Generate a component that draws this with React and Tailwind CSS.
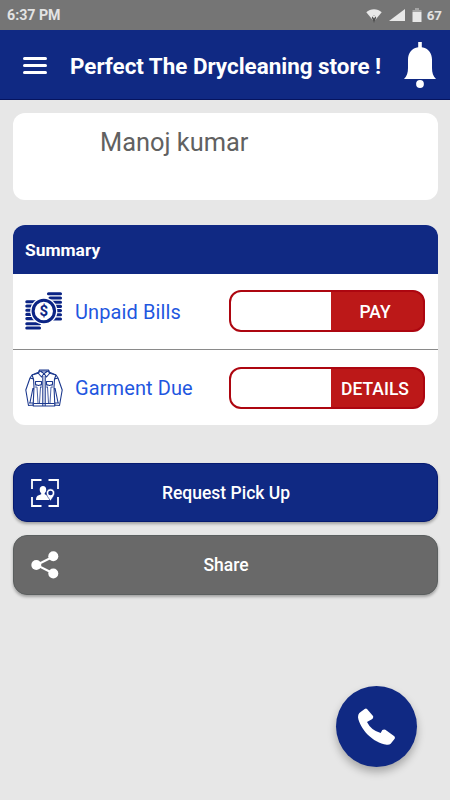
function WifiIcon() {
  return (
    <svg className="relative top-px" width="16" height="16" viewBox="0 0 16 16">
      <path d="M0.3 4.2C4.4 0.2 11.6 0.2 15.7 4.2L8 13.500Z" fill="#e8e8e8" />
      <path d="M5.800 9.500 8 7l2.200 2.500L8 15Z" fill="#4d4d4d" />
      <path d="M6.600 8.500 8 6.900l1.400 1.600L8 10.400Z" fill="#e8e8e8" />
    </svg>
  );
}

function BellIcon() {
  return (
    <svg width="32" height="46" viewBox="0 0 32 46" fill="white">
      <path d="M14.2 0h3.600v5.200c6.200.9 10.200 5.700 10.200 12.300v8.500c0 4.800 1.100 8.200 4 11H0c2.900-2.800 4-6.200 4-11v-8.500C4 10.900 8 6.100 14.200 5.200Z" />
      <circle cx="16" cy="42" r="3.900" />
    </svg>
  );
}

function BillsIcon() {
  return (
    <svg width="38" height="38" viewBox="0 0 38 38">
      <g stroke="#0b2485" strokeWidth="3.100" strokeLinecap="round">
        <path d="M23.500 1.800H35.500M25 6H35.500M1.800 9.800H10M1.800 14H10M1.800 18.200H10M1.800 22.400H10M1.800 26.600H12M1.800 31.800H14.500M1.800 36H14.500" />
        <path d="M26 10.200H35.500M28 14.400H35.500M28 18.600H35.500M28 22.800H35.500M28 27H35.500" />
      </g>
      <circle cx="18.800" cy="19" r="13.600" fill="white" />
      <circle cx="18.800" cy="19" r="10.700" fill="white" stroke="#0b2485" strokeWidth="3.100" />
      <text x="18.800" y="24.300" textAnchor="middle" fontSize="15" fontWeight="700" fill="#0b2485" fontFamily="Roboto, sans-serif">$</text>
    </svg>
  );
}

function JacketIcon() {
  return (
    <svg width="38" height="38" viewBox="0 0 38 38" fill="none" stroke="#1c398e" strokeWidth="1.100" strokeLinejoin="round">
      <path d="M14.500 1H23.500L24 3 31 6 33 9 37.200 21 34.500 36.500 30 36 29.700 33V37H8.300V33L8 36 3.500 36.500.800 21 5 9 7 6 14 3Z" />
      <path d="M14.500 1 13.500 4.500 16.500 8 19 4.500 21.500 8 24.500 4.500 23.500 1M15 2H23L19 4.500Z" />
      <path d="M7 6 8.500 10M31 6 29.500 10M7 6 14 4M31 6 24 4M5 9 8.500 10M33 9 29.500 10" />
      <path d="M8.500 10 9 18 8.300 33M29.500 10 29 18 29.700 33M8 19 5 33.500M30 19 33 33.500M4 34H8M30 34H34" />
      <path d="M17.800 7V37M20.200 7V37M8.500 34.500H29.500" />
      <path d="M10.500 12.500H16.500V15.500L13.500 16.500 10.500 15.500ZM21.500 12.500H27.500V15.500L24.500 16.500 21.500 15.500Z" />
      <path d="M11 16V19M16 16V19M22 16V19M27 16V19M12 18 13 34M15.500 18 14.500 34M22.500 18 23.500 34M26 18 25 34" strokeWidth="0.800" />
    </svg>
  );
}

function PickUpIcon() {
  return (
    <svg width="28" height="28" viewBox="0 0 28 28">
      <path d="M1 10V1H10.500M17.500 1H27V10M27 18V27H17.500M10.500 27H1V18" fill="none" stroke="white" strokeWidth="1.800" />
      <path d="M12 7c2 0 3.200 1.300 3.200 3.500 0 1.700-.600 3-1.500 3.700v1l2.500 1.200c1.500.700 2.500 1.500 2.800 4.600H5c0-3.300 1-4 2.700-4.700l2.500-1.100v-1c-.900-.700-1.500-2-1.500-3.700C8.700 8.300 10 7 12 7Z" fill="white" />
      <path d="M19.500 9.800c2.500 0 4.200 1.800 4.200 4.200 0 2.500-2.200 4.700-4.200 8-2-3.300-4.200-5.500-4.200-8 0-2.400 1.700-4.200 4.200-4.200Z" fill="white" stroke="#102983" strokeWidth=".600" />
      <circle cx="19.500" cy="14" r="2.300" fill="#102983" />
    </svg>
  );
}

function ShareIcon() {
  return (
    <svg width="28" height="28" viewBox="0 0 28 28" fill="white">
      <path d="M22.500 5.500 5.500 14 22.500 22.500" fill="none" stroke="white" strokeWidth="2" />
      <circle cx="22.300" cy="5.300" r="5" />
      <circle cx="5.300" cy="14" r="5" />
      <circle cx="22.300" cy="22.500" r="5" />
    </svg>
  );
}

function PhoneIcon() {
  return (
    <svg width="37" height="37" viewBox="0 0 111 111" fill="white">
      <path d="M20 3Q24 0 27 3L45 24Q47 28 43 33L27 42Q39 67 68 75L73 66Q77 63 82 65L109 85Q112 88 110 92L98 107Q94 111 86 110C45 106 5 62 0 28Q0 19 4 15Z" />
    </svg>
  );
}

function SummaryRow({ icon, label, action, className }) {
  return (
    <div className={`flex items-center pl-3 pr-[12.5px] ${className}`}>
      {icon}
      <span className="ml-[12.5px] flex-1 pt-px text-[20px] leading-6 tracking-[0.1px] text-[#1f57e0]">{label}</span>
      <div className="flex h-[42px] w-[196px] overflow-hidden rounded-[12px] border-2 border-[#ad0610] bg-[#bc1818]">
        <div className="flex-1 bg-white" />
        <button className="w-[92px] pr-1 pt-[2px] text-[17.500px] font-medium text-white">{action}</button>
      </div>
    </div>
  );
}

export default function App() {
  return (
    <div className="relative h-[800px] w-[450px] overflow-hidden bg-[#e7e7e7] font-[Roboto,sans-serif]">
      <div className="flex h-[30px] items-center bg-[#757575] pl-[7px] pr-2 text-[14.2px] font-bold text-[#e3e3e3]">
        <span className="pt-px">6:37 PM</span>
        <div className="ml-auto flex items-center">
          <WifiIcon />
          <svg className="ml-[7px]" width="16" height="12" viewBox="0 0 16 12" fill="#e8e8e8">
            <path d="M16 0V12H0Z" />
          </svg>
          <svg className="ml-[7px]" width="10" height="14" viewBox="0 0 10 14">
            <path d="M3 0H7V2H9.500V4H.500V2H3Z" fill="#a5a5a5" />
            <path d="M.500 4H9.500V14H.500Z" fill="#e8e8e8" />
          </svg>
          <span className="ml-[5px] pt-px text-[13.300px]">67</span>
        </div>
      </div>

      <header className="flex h-[70px] items-center border-b border-[#06145f] bg-[#102983] pl-[23px] pr-[14px]">
        <button className="mt-[2px] flex w-6 flex-col gap-[4px]">
          <span className="h-[3px] rounded-full bg-white" />
          <span className="h-[3px] rounded-full bg-white" />
          <span className="h-[3px] rounded-full bg-white" />
        </button>
        <h1 className="ml-[23px] flex-1 whitespace-nowrap pt-[5px] text-[22.400px] font-bold text-white">Perfect The Drycleaning store !</h1>
        <BellIcon />
      </header>

      <main className="px-[12.500px] pt-[12.500px]">
        <div className="h-[87.500px] rounded-[12px] bg-white pl-[87.500px] pt-[13.500px] text-[25.400px] leading-8 text-[#616161]">
          Manoj kumar
        </div>

        <section className="mt-[25px] h-[200px] overflow-hidden rounded-[12px] bg-white">
          <h2 className="flex h-[48.500px] items-center bg-[#102983] pl-[12.500px] pt-[2px] text-[17.400px] font-bold text-white">Summary</h2>
          <SummaryRow icon={<BillsIcon />} label="Unpaid Bills" action="PAY" className="h-[76px] border-b border-[#8a8a8a]" />
          <SummaryRow icon={<JacketIcon />} label="Garment Due" action="DETAILS" className="h-[75.500px] pt-px" />
        </section>

        <button className="relative mt-[38px] flex h-[59px] w-full items-center justify-center rounded-[14px] border border-[#061a70] bg-[#102983] pl-[2px] pt-[2px] text-[17.500px] font-medium text-white shadow-[0_2px_3px_rgba(0,0,0,0.3)]">
          <span className="absolute left-[17.500px] top-[14.500px]"><PickUpIcon /></span>
          Request Pick Up
        </button>
        <button className="relative mt-[13px] flex h-[60px] w-full items-center justify-center rounded-[14px] border border-[#5b5f5f] bg-[#696969] pl-[2px] pt-px text-[17.500px] font-medium text-white shadow-[0_2px_3px_rgba(0,0,0,0.3)]">
          <span className="absolute left-[17.500px] top-[15px]"><ShareIcon /></span>
          Share
        </button>
      </main>

      <button className="absolute bottom-[33px] right-[33px] flex size-[81px] items-center justify-center rounded-full bg-[#102983] shadow-[0_5px_9px_rgba(0,0,0,0.28)]">
        <PhoneIcon />
      </button>
    </div>
  );
}
